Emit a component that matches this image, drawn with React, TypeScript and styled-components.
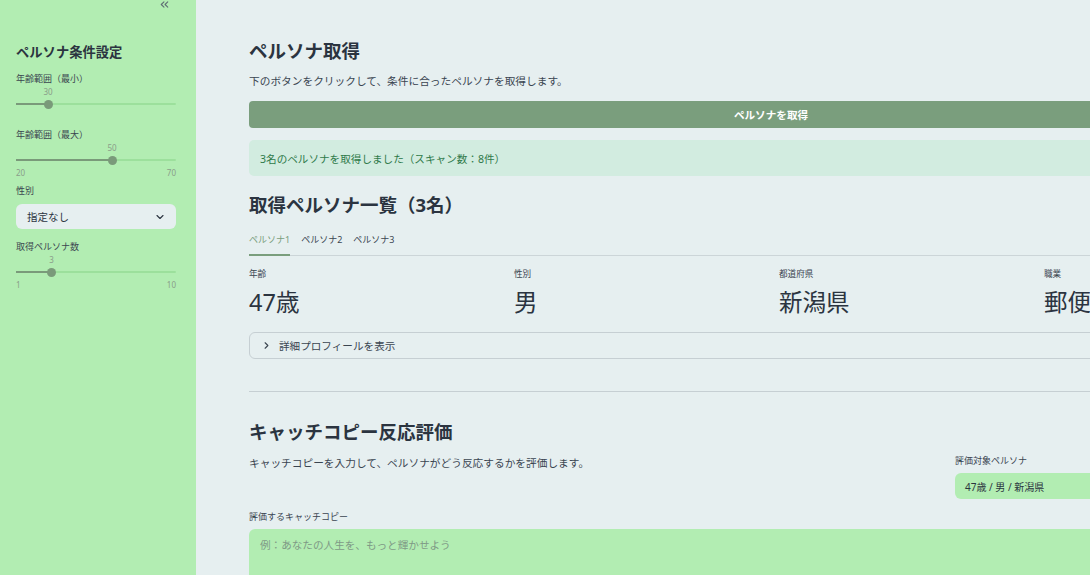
import styled, { createGlobalStyle } from "styled-components";
import { ChevronsLeft, ChevronDown, ChevronRight } from "lucide-react";

const GlobalStyle = createGlobalStyle`
	html, body {
		margin: 0;
		padding: 0;
		overflow: hidden;
		background: #e6eff0;
	}
	* {
		box-sizing: border-box;
	}
	body {
		font-family: "Noto Sans", "Noto Sans CJK JP", sans-serif;
		color: #2b3440;
	}
`;

/* layout */
const Page = styled.div`
	display: flex;
	width: 1090px;
	height: 575px;
	overflow: hidden;
`;

const Sidebar = styled.aside`
	position: relative;
	flex: 0 0 196px;
	background: #b2edb2;
	padding: 43px 20px 0 16px;
	display: flex;
	flex-direction: column;

	& > * {
		flex-shrink: 0;
	}
`;

const Collapse = styled.button`
	position: absolute;
	top: -2px;
	left: 158px;
	border: none;
	background: transparent;
	padding: 0;
	color: #5f6e74;
	display: flex;
`;

const SideTitle = styled.h2`
	margin: 0 0 12px;
	font-size: 13.3px;
	font-weight: 700;
	line-height: 18px;
`;

const Label = styled.div`
	font-size: 9px;
	line-height: 12px;
	color: #3a4550;
`;

/* slider */
const SliderBox = styled.div`
	position: relative;
	height: 36px;
	margin-bottom: 8px;
`;

const SliderValue = styled.span`
	position: absolute;
	top: 2px;
	transform: translateX(-50%);
	font-size: 8px;
	line-height: 10px;
	color: #8a9e8a;
`;

const Track = styled.div`
	position: absolute;
	top: 18px;
	left: 0;
	right: 0;
	height: 2px;
	border-radius: 1px;
	background: #9ce09c;
`;

const Fill = styled.div`
	position: absolute;
	top: 0;
	left: 0;
	bottom: 0;
	background: #7a9a7a;
`;

const Thumb = styled.div`
	position: absolute;
	top: 14.5px;
	width: 9px;
	height: 9px;
	margin-left: -4.5px;
	border-radius: 50%;
	background: #7a9a7a;
`;

const Ends = styled.div`
	position: absolute;
	top: 27px;
	left: 0;
	right: 0;
	display: flex;
	justify-content: space-between;
	font-size: 8px;
	line-height: 10px;
	color: #8a9e8a;
`;

const Select = styled.div`
	margin: 7px 0 12px;
	height: 25px;
	border-radius: 6px;
	background: #e6eff0;
	display: flex;
	align-items: center;
	justify-content: space-between;
	padding: 0 10px 0 11px;
	font-size: 10.5px;
	color: #2b3440;
`;

const Main = styled.main`
	flex: 0 0 auto;
	width: 1044px;
	margin-left: 53px;
	padding-top: 38px;
	display: flex;
	flex-direction: column;

	& > * {
		flex-shrink: 0;
	}
`;

const Title = styled.h1<{ $mt?: number }>`
	margin: ${(p) => p.$mt ?? 0}px 0 0;
	font-size: 18.5px;
	font-weight: 700;
	line-height: 26px;
	color: #2b3440;
`;

const Text = styled.p`
	margin: 0;
	font-size: 10.7px;
	line-height: 16px;
	color: #3a4550;
`;

const Button = styled.button`
	margin-top: 12px;
	height: 27px;
	border: none;
	border-radius: 4px;
	background: #7a9e7d;
	color: #ffffff;
	font-family: inherit;
	font-size: 10.6px;
	font-weight: 700;
`;

const Success = styled.div`
	margin-top: 12px;
	height: 36px;
	border-radius: 5px;
	background: #d2ece0;
	color: #2f7a4a;
	font-size: 10.6px;
	display: flex;
	align-items: center;
	padding-left: 11px;
`;

const Tabs = styled.div`
	margin-top: 14px;
	display: flex;
	gap: 11px;
	border-bottom: 1px solid #ccd5d8;
`;

const Tab = styled.div<{ $active?: boolean }>`
	font-size: 9px;
	line-height: 12px;
	padding: 2px 0 8px;
	color: ${(p) => (p.$active ? "#7a9e7d" : "#3a4550")};
	border-bottom: 2px solid ${(p) => (p.$active ? "#7a9e7d" : "transparent")};
	margin-bottom: -1px;
`;

const Metrics = styled.div`
	margin-top: 12px;
	display: grid;
	grid-template-columns: repeat(4, 1fr);
	gap: 16px;
`;

const MetricLabel = styled.div`
	font-size: 8.6px;
	line-height: 12px;
	color: #3a4550;
`;

const MetricValue = styled.div`
	margin-top: 6px;
	font-size: 23.5px;
	line-height: 32px;
	white-space: nowrap;
	color: #2b3440;
`;

const Expander = styled.div`
	margin-top: 14px;
	height: 27px;
	border: 1px solid #c6cfd3;
	border-radius: 6px;
	display: flex;
	align-items: center;
	gap: 7px;
	padding-left: 11px;
	font-size: 10.6px;
	color: #3a4550;
`;

const Divider = styled.hr`
	margin: 32px 0 0;
	border: none;
	border-top: 1px solid #c6cfd3;
`;

const Columns = styled.div`
	margin-top: 10px;
	display: grid;
	grid-template-columns: 690px 1fr;
	gap: 16px;
`;

const SmallLabel = styled.div`
	font-size: 9px;
	line-height: 12px;
	color: #3a4550;
`;

const PersonaBox = styled.div`
	margin-top: 6px;
	height: 26px;
	border-radius: 6px;
	background: #b2edb2;
	display: flex;
	align-items: center;
	padding-left: 10px;
	font-size: 10px;
	color: #2b3440;
`;

const TextArea = styled.div`
	margin-top: 6px;
	height: 60px;
	border-radius: 6px;
	background: #b2edb2;
	padding: 8px 11px;
	font-size: 10.6px;
	color: #7f9a86;
`;

type SliderProps = { value: number; min: number; max: number; ends?: boolean };

const Slider = ({ value, min, max, ends }: SliderProps) => {
	const pct = ((value - min) / (max - min)) * 100;
	return (
		<SliderBox>
			<SliderValue style={{ left: `${pct}%` }}>{value}</SliderValue>
			<Track>
				<Fill style={{ width: `${pct}%` }} />
			</Track>
			<Thumb style={{ left: `${pct}%` }} />
			{ends && (
				<Ends>
					<span>{min}</span>
					<span>{max}</span>
				</Ends>
			)}
		</SliderBox>
	);
};

const metrics = [
	{ label: "年齢", value: "47歳" },
	{ label: "性別", value: "男" },
	{ label: "都道府県", value: "新潟県" },
	{ label: "職業", value: "郵便局員" },
];

export default function App() {
	return (
		<Page>
			<GlobalStyle />
			<Sidebar>
				<Collapse>
					<ChevronsLeft size={13} strokeWidth={2} />
				</Collapse>
				<SideTitle>ペルソナ条件設定</SideTitle>
				<Label>年齢範囲（最小）</Label>
				<Slider value={30} min={20} max={70} />
				<Label>年齢範囲（最大）</Label>
				<Slider value={50} min={20} max={70} ends />
				<Label>性別</Label>
				<Select>
					<span>指定なし</span>
					<ChevronDown size={12} strokeWidth={2.2} />
				</Select>
				<Label>取得ペルソナ数</Label>
				<Slider value={3} min={1} max={10} ends />
			</Sidebar>
			<Main>
				<Title>ペルソナ取得</Title>
				<Text style={{ marginTop: 9 }}>
					下のボタンをクリックして、条件に合ったペルソナを取得します。
				</Text>
				<Button>ペルソナを取得</Button>
				<Success>3名のペルソナを取得しました（スキャン数：8件）</Success>
				<Title $mt={16}>取得ペルソナ一覧（3名）</Title>
				<Tabs>
					<Tab $active>ペルソナ1</Tab>
					<Tab>ペルソナ2</Tab>
					<Tab>ペルソナ3</Tab>
				</Tabs>
				<Metrics>
					{metrics.map((m) => (
						<div key={m.label}>
							<MetricLabel>{m.label}</MetricLabel>
							<MetricValue>{m.value}</MetricValue>
						</div>
					))}
				</Metrics>
				<Expander>
					<ChevronRight size={11} strokeWidth={2.4} />
					<span>詳細プロフィールを表示</span>
				</Expander>
				<Divider />
				<Title $mt={27}>キャッチコピー反応評価</Title>
				<Columns>
					<div>
						<Text>キャッチコピーを入力して、ペルソナがどう反応するかを評価します。</Text>
					</div>
					<div>
						<SmallLabel>評価対象ペルソナ</SmallLabel>
						<PersonaBox>47歳 / 男 / 新潟県</PersonaBox>
					</div>
				</Columns>
				<SmallLabel style={{ marginTop: 12 }}>評価するキャッチコピー</SmallLabel>
				<TextArea>例：あなたの人生を、もっと輝かせよう</TextArea>
			</Main>
		</Page>
	);
}
